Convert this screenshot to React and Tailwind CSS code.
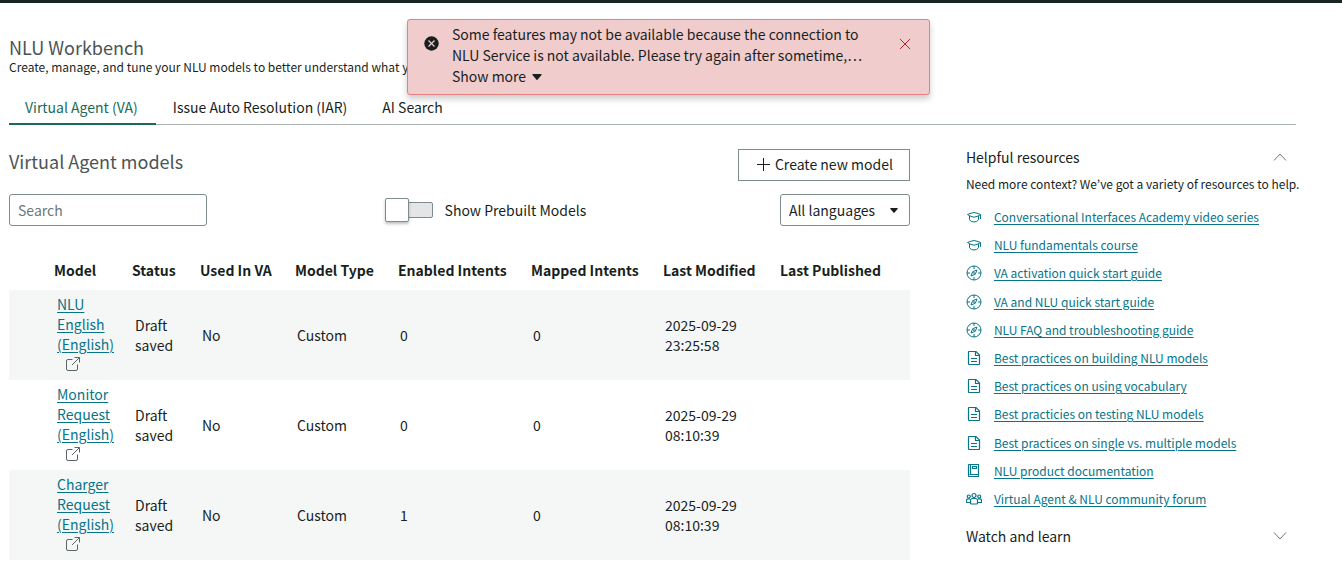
const models = [
  { name: 'NLU English (English)', enabled: 0, mapped: 0, modified: '2025-09-29 23:25:58' },
  { name: 'Monitor Request (English)', enabled: 0, mapped: 0, modified: '2025-09-29 08:10:39' },
  { name: 'Charger Request (English)', enabled: 1, mapped: 0, modified: '2025-09-29 08:10:39' },
];

const resources = [
  { icon: 'cap', label: 'Conversational Interfaces Academy video series' },
  { icon: 'cap', label: 'NLU fundamentals course' },
  { icon: 'compass', label: 'VA activation quick start guide' },
  { icon: 'compass', label: 'VA and NLU quick start guide' },
  { icon: 'compass', label: 'NLU FAQ and troubleshooting guide' },
  { icon: 'doc', label: 'Best practices on building NLU models' },
  { icon: 'doc', label: 'Best practices on using vocabulary' },
  { icon: 'doc', label: 'Best practicies on testing NLU models' },
  { icon: 'doc', label: 'Best practices on single vs. multiple models' },
  { icon: 'book', label: 'NLU product documentation' },
  { icon: 'people', label: 'Virtual Agent & NLU community forum' },
];

const iconPaths = {
  cap: (
    <>
      <path d="M1.500 5.500 4 4.500Q8 2.500 12 4.500L14.500 5.500 12 7Q8 9.500 4 7z" />
      <path d="M3.500 7v3.800Q5 13 8 13T12.500 10.800V7" />
      <path d="M14.500 5.500V10" />
    </>
  ),
  compass: (
    <>
      <circle cx="8" cy="8" r="7" />
      <path d="M8 1v3M8 12v3M1 8h3M12 8h3" />
      <path d="M11 5 9.300 9.300 5 11 6.700 6.700z" />
      <circle cx="8" cy="8" r="0.500" />
    </>
  ),
  doc: (
    <>
      <path d="M3 1.500h7L13.500 5v9a.5.5 0 0 1-.5.5H3a.5.5 0 0 1-.5-.5V2a.5.5 0 0 1 .5-.5z" strokeWidth="1.200" />
      <path d="M9.500 1.500V5.500H13.500M5 8.500h6M5 11.500h6" strokeWidth="1.200" />
    </>
  ),
  book: (
    <path
      d="M12.500 11.500v-10H3A.5.5 0 0 0 2.500 2v11a.5.5 0 0 0 .5.5h10M12.500 11.500H3.500M4.500 1.500v10M6.500 3.500h4v2h-4zM12.500 11.500v2"
      strokeWidth="1.200"
    />
  ),
  people: (
    <g strokeWidth="1.200">
      <circle cx="8" cy="4.500" r="2" />
      <path d="M4.500 12v-2.500a2 2 0 0 1 2-2h3a2 2 0 0 1 2 2V12a1 1 0 0 1-1 1h-5a1 1 0 0 1-1-1z" />
      <circle cx="2.800" cy="5.500" r="1.500" />
      <circle cx="13.200" cy="5.500" r="1.500" />
      <path d="M4.500 11.500H1a.5.5 0 0 1-.5-.5V9.500A1.700 1.700 0 0 1 2.200 7.800H4M11.500 11.500H15a.5.5 0 0 0 .5-.5V9.500a1.700 1.700 0 0 0-1.700-1.700H12" />
    </g>
  ),
};

function ResourceIcon({ name }) {
  return (
    <svg viewBox="0 0 16 16" fill="none" stroke="currentColor" className="size-4 shrink-0" aria-hidden="true">
      {iconPaths[name]}
    </svg>
  );
}

function Caret({ className }) {
  return (
    <svg viewBox="0 0 10 6" fill="currentColor" className={className} aria-hidden="true">
      <path d="M1 0h8a.6.6 0 0 1 .5 1L5.500 5.700a.7.7 0 0 1-1 0L.5 1A.6.6 0 0 1 1 0z" />
    </svg>
  );
}

function Chevron({ up }) {
  return (
    <svg viewBox="0 0 14 8" fill="none" stroke="currentColor" className="mr-[9px] h-2 w-3.5 text-[#6b7a7b]" aria-hidden="true">
      <path d={up ? 'M1 7.500 7 1l6 6.500' : 'M1 .5 7 7l6-6.500'} />
    </svg>
  );
}

function ErrorBanner() {
  return (
    <div
      role="alert"
      className="absolute top-4 left-[407px] flex h-[76px] w-[523px] rounded-[3px] border border-[#e08283] bg-[#f1cccd] pt-1 shadow-[0_4px_6px_rgba(0,0,0,0.2)]"
    >
      <svg viewBox="0 0 16 16" className="mt-3 ml-4 size-4 shrink-0" aria-hidden="true">
        <circle cx="7.500" cy="7.500" r="7.200" fill="#181f1e" />
        <path d="m4.500 4.500 6 6M10.500 4.500l-6 6" stroke="#f1cccd" strokeWidth="1.200" />
      </svg>
      <div className="ml-3 flex-1">
        <p className="w-[424px] leading-[21px]">
          Some features may not be available because the connection to NLU Service is not available. Please try again
          after sometime,…
        </p>
        <button type="button" className="flex items-center gap-1.5 leading-[21px]">
          Show more <Caret className="h-1.5 w-2.5" />
        </button>
      </div>
      <button type="button" aria-label="Dismiss" className="mt-3 mr-4 size-4 text-[#b3282d]">
        <svg viewBox="0 0 16 16" fill="none" stroke="currentColor" aria-hidden="true">
          <path d="m3 3 10 10M13 3 3 13" />
        </svg>
      </button>
    </div>
  );
}

function ModelsTable() {
  return (
    <table className="mt-[26px] w-full table-fixed border-collapse text-left">
      <colgroup>
        <col className="w-[37px]" />
        <col className="w-[78px]" />
        <col className="w-[68px]" />
        <col className="w-[95px]" />
        <col className="w-[103px]" />
        <col className="w-[133px]" />
        <col className="w-[132px]" />
        <col className="w-[117px]" />
        <col className="w-[138px]" />
      </colgroup>
      <thead>
        <tr className="h-[38px] whitespace-nowrap">
          <td />
          {['Model', 'Status', 'Used In VA', 'Model Type', 'Enabled Intents', 'Mapped Intents', 'Last Modified', 'Last Published'].map((h) => (
            <th key={h} scope="col" className="px-2 pt-0 pb-0.5 font-bold">
              {h}
            </th>
          ))}
        </tr>
      </thead>
      <tbody>
        {models.map((m) => (
          <tr key={m.name} className="h-[90px] leading-5 odd:bg-[#f5f7f7]">
            <td />
            <td className="pb-0.5 pl-[11px]">
              <a href="#model" className="block w-15 text-[#077589] underline underline-offset-2">
                {m.name}
              </a>
              <a href="#open" aria-label={`Open ${m.name} in a new tab`} className="ml-2 flex h-5 items-center text-[#5b6667]">
                <svg viewBox="0 0 16 16" fill="none" stroke="currentColor" className="size-4" aria-hidden="true">
                  <path d="M7.500 3.500H3A1.500 1.500 0 0 0 1.500 5v8A1.500 1.500 0 0 0 3 14.500h8a1.500 1.500 0 0 0 1.500-1.500V8.500M9.500 1.500h5v5M14.500 1.500 7 9" />
                </svg>
              </a>
            </td>
            <td className="px-[11px]">Draft saved</td>
            <td className="pl-2.5">No</td>
            <td className="pl-2.5">Custom</td>
            <td className="pl-2.5">{m.enabled}</td>
            <td className="pl-2.5">{m.mapped}</td>
            <td className="px-2.5">{m.modified}</td>
            <td />
          </tr>
        ))}
      </tbody>
    </table>
  );
}

export default function App() {
  return (
    <div className="relative border-t-[3px] border-[#172422] bg-white pr-[46px] pl-[9px] font-['Noto_Sans_CJK_KR','Open_Sans',sans-serif] text-[14px] leading-5 text-[#181f1e]">
      <header className="pt-8">
        <h1 className="text-[18px] leading-6 text-[#4a5455]">NLU Workbench</h1>
        <p className="text-[12px] leading-4">
          Create, manage, and tune your NLU models to better understand what your
        </p>
      </header>

      <nav className="mt-4 flex h-[34px] gap-px border-b border-[#a9b1b1]" aria-label="Applications">
        <a href="#va" aria-current="page" className="h-[34px] border-b-2 border-[#1a6b58] pt-1.5 pr-[18px] pl-4 text-[#1a6b58]">
          Virtual Agent (VA)
        </a>
        <a href="#iar" className="pt-1.5 pr-[18px] pl-4">
          Issue Auto Resolution (IAR)
        </a>
        <a href="#search" className="pt-1.5 pr-[18px] pl-4">
          AI Search
        </a>
      </nav>

      <div className="flex gap-14 pt-6">
        <main className="w-[70%] shrink-0">
          <div className="flex items-start justify-between">
            <h2 className="text-[18px] leading-6 text-[#4a5455]">Virtual Agent models</h2>
            <button type="button" className="flex h-8 items-center gap-1 border border-[#7f8c8d] px-4 pb-0.5">
              <svg viewBox="0 0 16 16" fill="none" stroke="currentColor" className="size-4" aria-hidden="true">
                <path d="M8.500 2v13M2 8.500h13" />
              </svg>
              Create new model
            </button>
          </div>

          <div className="mt-[13px] flex items-center justify-between">
            <input
              type="search"
              aria-label="Search models"
              placeholder="Search"
              className="h-8 w-[198px] rounded-[3px] border border-[#7f8c8d] px-2 placeholder:text-[#6b7778]"
            />
            <label className="flex items-center gap-3 pr-4">
              <span className="relative flex h-6 w-12 items-center">
                <input
                  type="checkbox"
                  role="switch"
                  className="h-4 w-12 appearance-none rounded-[2px] border border-[#7f8c8d] bg-[#e3e5e6]"
                />
                <span className="absolute top-0 left-0 size-6 rounded-[2px] border border-[#7f8c8d] bg-white shadow-[0_2px_3px_rgba(0,0,0,0.25)]" />
              </span>
              Show Prebuilt Models
            </label>
            <div className="relative">
              <select
                aria-label="Language"
                className="h-8 w-[130px] appearance-none rounded-[3px] border border-[#7f8c8d] bg-white px-2"
              >
                <option>All languages</option>
              </select>
              <Caret className="pointer-events-none absolute top-3.5 right-3 h-[5px] w-2" />
            </div>
          </div>

          <ModelsTable />
        </main>

        <aside className="min-w-0 flex-1">
          <button type="button" className="flex h-4 w-full items-center justify-between">
            Helpful resources <Chevron up />
          </button>
          <p className="mt-[9px] text-[12px] leading-5 whitespace-nowrap">
            Need more context? We’ve got a variety of resources to help.
          </p>
          <ul className="mt-[13px] flex h-[302px] flex-col justify-between text-[12px] leading-5 text-[#077589]">
            {resources.map((r) => (
              <li key={r.label} className="flex items-center gap-3">
                <ResourceIcon name={r.icon} />
                <a href="#resource" className="underline underline-offset-2">
                  {r.label}
                </a>
              </li>
            ))}
          </ul>
          <button type="button" className="mt-[17px] flex h-5 w-full items-center justify-between">
            Watch and learn <Chevron />
          </button>
        </aside>
      </div>

      <ErrorBanner />
    </div>
  );
}
